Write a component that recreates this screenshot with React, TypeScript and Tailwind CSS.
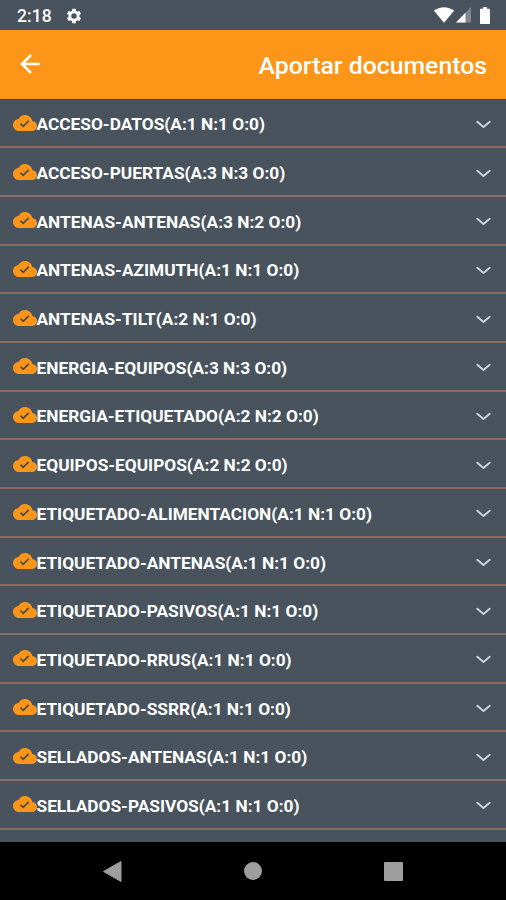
import { FC } from "react";

interface Section {
  name: string;
  a: number;
  n: number;
  o: number;
}

const sections: Section[] = [
  { name: "ACCESO-DATOS", a: 1, n: 1, o: 0 },
  { name: "ACCESO-PUERTAS", a: 3, n: 3, o: 0 },
  { name: "ANTENAS-ANTENAS", a: 3, n: 2, o: 0 },
  { name: "ANTENAS-AZIMUTH", a: 1, n: 1, o: 0 },
  { name: "ANTENAS-TILT", a: 2, n: 1, o: 0 },
  { name: "ENERGIA-EQUIPOS", a: 3, n: 3, o: 0 },
  { name: "ENERGIA-ETIQUETADO", a: 2, n: 2, o: 0 },
  { name: "EQUIPOS-EQUIPOS", a: 2, n: 2, o: 0 },
  { name: "ETIQUETADO-ALIMENTACION", a: 1, n: 1, o: 0 },
  { name: "ETIQUETADO-ANTENAS", a: 1, n: 1, o: 0 },
  { name: "ETIQUETADO-PASIVOS", a: 1, n: 1, o: 0 },
  { name: "ETIQUETADO-RRUS", a: 1, n: 1, o: 0 },
  { name: "ETIQUETADO-SSRR", a: 1, n: 1, o: 0 },
  { name: "SELLADOS-ANTENAS", a: 1, n: 1, o: 0 },
  { name: "SELLADOS-PASIVOS", a: 1, n: 1, o: 0 }
];

const StatusBar: FC = () => (
  <div className="flex h-[30px] shrink-0 items-center justify-between pl-[17px] pr-[16px]">
    <div className="flex items-center gap-[12px]">
      <span className="mt-[2px] w-[36px] whitespace-nowrap text-[17.5px] font-medium leading-[30px] tracking-[0.1px]">
        2:18
      </span>
      <svg className="mt-px size-[18px]" viewBox="0 0 24 24" fill="currentColor">
        <path d="M19.14 12.94c.04-.3.06-.61.06-.94 0-.32-.02-.64-.07-.94l2.03-1.58a.49.49 0 0 0 .12-.61l-1.92-3.32a.488.488 0 0 0-.59-.22l-2.39.96c-.5-.38-1.03-.7-1.62-.94l-.36-2.54a.484.484 0 0 0-.48-.41h-3.84c-.24 0-.43.17-.47.41l-.36 2.54c-.59.24-1.13.57-1.62.94l-2.39-.96c-.22-.08-.47 0-.59.22L2.74 8.87c-.12.21-.08.47.12.61l2.03 1.58c-.05.3-.09.63-.09.94s.02.64.07.94l-2.03 1.58a.49.49 0 0 0-.12.61l1.92 3.32c.12.22.37.29.59.22l2.39-.96c.5.38 1.03.7 1.62.94l.36 2.54c.05.24.24.41.48.41h3.84c.24 0 .44-.17.47-.41l.36-2.54c.59-.24 1.13-.56 1.62-.94l2.39.96c.22.08.47 0 .59-.22l1.92-3.32c.12-.22.07-.47-.12-.61l-2.01-1.58zM12 15.6A3.6 3.6 0 1 1 12 8.4a3.6 3.6 0 0 1 0 7.2z" />
      </svg>
    </div>
    <div className="flex items-center">
      <svg className="h-[16px] w-[20px]" viewBox="0 0 20 16" fill="currentColor">
        <path d="M0 3.8C5.6-1.1 14.4-1.1 20 3.8L10 15.8z" />
      </svg>
      <svg className="ml-[2px] h-[16px] w-[15px]" viewBox="0 0 15 16" fill="currentColor">
        <path d="M15 0v15.5H0z" opacity=".3" />
        <path d="M9.5 5.7v9.8H0z" />
      </svg>
      <svg className="ml-[9px] h-[17px] w-[10px]" viewBox="0 0 10 17" fill="currentColor">
        <path d="M3 0h4v1.8h2c.6 0 1 .4 1 1V16c0 .6-.4 1-1 1H1c-.6 0-1-.4-1-1V2.8c0-.6.4-1 1-1h2z" />
      </svg>
    </div>
  </div>
);

const Header: FC = () => (
  <header className="flex h-[69.5px] shrink-0 items-center justify-between border-b border-[#27464c] bg-[#fc9518] pl-[20px] pr-[19px]">
    <svg className="size-[20px]" viewBox="0 0 20 20" fill="none" stroke="currentColor" strokeWidth="2.5">
      <path d="M19.8 10H2M11 1L2 10l9 9" />
    </svg>
    <h1 className="mt-[3px] whitespace-nowrap text-[24.8px] font-medium leading-[30px]">
      Aportar documentos
    </h1>
  </header>
);

const SectionRow: FC<Section> = ({ name, a, n, o }) => (
  <li className="flex h-[48.7px] items-center border-b-2 border-[#8a6d62] pl-[12.5px] pr-[15px] pt-[2px]">
    <svg className="mb-[2px] size-[24px] shrink-0" viewBox="0 0 24 24">
      <path
        fill="#fc9518"
        d="M19.35 10.04C18.67 6.59 15.64 4 12 4 9.11 4 6.6 5.64 5.35 8.04 2.34 8.36 0 10.91 0 14c0 3.31 2.69 6 6 6h13c2.76 0 5-2.24 5-5 0-2.64-2.05-4.78-4.65-4.96z"
      />
      <path d="M7.5 12.7l2.7 2.7 5.5-5.6" fill="none" stroke="#4a4d45" strokeWidth="1.7" />
    </svg>
    <span className="mt-px flex-1 whitespace-nowrap text-[17.3px] font-bold leading-[24px]">
      {`${name}(A:${a} N:${n} O:${o})`}
    </span>
    <svg
      className="mt-px h-[9px] w-[15px]"
      viewBox="0 0 15 9"
      fill="none"
      stroke="#ccd3d8"
      strokeWidth="2"
      strokeLinecap="round"
      strokeLinejoin="round"
    >
      <path d="M1.3 1.8l6.2 5.2 6.2-5.2" />
    </svg>
  </li>
);

const NavigationBar: FC = () => (
  <nav className="flex h-[58px] shrink-0 items-center justify-between bg-black px-[103px] text-[#9e9e9e]">
    <svg className="h-[21px] w-[19px]" viewBox="0 0 19 21" fill="currentColor">
      <path d="M18 .5v20L.5 10.5z" stroke="currentColor" strokeLinejoin="round" />
    </svg>
    <div className="size-[18px] rounded-full bg-[#9e9e9e]" />
    <div className="size-[19px] rounded-[1px] bg-[#9e9e9e]" />
  </nav>
);

export default function App() {
  return (
    <div className="flex h-[900px] w-[506px] flex-col overflow-hidden bg-[#48535d] font-[Roboto,sans-serif] text-white">
      <StatusBar />
      <Header />
      <ul className="min-h-0 flex-1 overflow-hidden">
        {sections.map((section) => (
          <SectionRow key={section.name} {...section} />
        ))}
      </ul>
      <NavigationBar />
    </div>
  );
}
